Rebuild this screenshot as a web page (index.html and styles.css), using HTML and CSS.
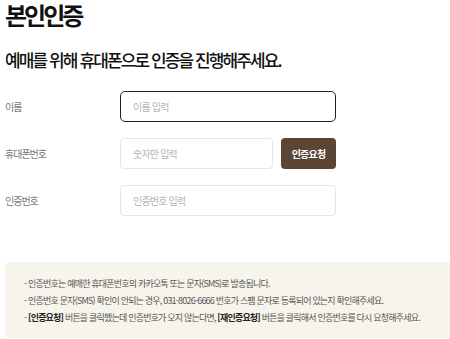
FILE: index.html
```html
<!DOCTYPE html>
<html lang="ko">

<head>
    <meta charset="UTF-8">
    <meta name="viewport" content="width=device-width, initial-scale=1.0">
    <title>본인인증</title>
    <link rel="stylesheet" href="styles.css">
</head>

<body>
    <div class="container">
        <h1 class="title">본인인증</h1>
        <h2 class="subtitle">예매를 위해 휴대폰으로 인증을 진행해주세요.</h2>

        <form class="auth-form">
            <div class="form-row">
                <label class="form-label" for="userName">이름</label>
                <input class="form-input focused" id="userName" type="text" placeholder="이름 입력">
            </div>
            <div class="form-row">
                <label class="form-label" for="userPhone">휴대폰번호</label>
                <input class="form-input short" id="userPhone" type="text" placeholder="숫자만 입력">
                <button class="request-btn" type="button">인증요청</button>
            </div>
            <div class="form-row">
                <label class="form-label" for="authCode">인증번호</label>
                <input class="form-input" id="authCode" type="text" placeholder="인증번호 입력">
            </div>
        </form>

        <div class="notice">
            <p>- 인증번호는 예매한 휴대폰번호의 카카오톡 또는 문자(SMS)로 발송됩니다.</p>
            <p>- 인증번호 문자(SMS) 확인이 안되는 경우, 031-8026-6666 번호가 스팸 문자로 등록되어 있는지 확인해주세요.</p>
            <p>- <strong>[인증요청]</strong> 버튼을 클릭했는데 인증번호가 오지 않는다면, <strong>[재인증요청]</strong> 버튼을 클릭해서 인증번호를 다시 요청해주세요.</p>
        </div>
    </div>
</body>
</html>
```

FILE: styles.css
```css
body {
    font-family: 'Noto Sans CJK KR', 'Noto Sans', sans-serif;
    background-color: #ffffff;
    color: #111111;
    margin: 0;
    padding: 0;
}

.container {
    padding: 0 0 0 5px;
}

.title {
    font-size: 24px;
    font-weight: 700;
    line-height: 30px;
    letter-spacing: -3px;
    margin: 0;
}

.subtitle {
    font-size: 17px;
    font-weight: 500;
    line-height: 24px;
    letter-spacing: -1.9px;
    margin: 18px 0 0;
}

.auth-form {
    margin-top: 19px;
    display: flex;
    flex-direction: column;
    gap: 16px;
}

.form-row {
    display: flex;
    align-items: center;
}

.form-label {
    width: 115px;
    font-size: 10px;
    color: #777777;
    letter-spacing: -1px;
}

.form-input {
    box-sizing: border-box;
    width: 216px;
    height: 31px;
    padding: 0 12px;
    border: 1px solid #e6e6e6;
    border-radius: 4px;
    font-family: inherit;
    font-size: 10px;
    letter-spacing: -0.8px;
    color: #333333;
    outline: none;
}

.form-input::placeholder {
    color: #b5b5b5;
}

.form-input.focused {
    border: 1.5px solid #222222;
    border-radius: 5px;
}

.form-input.short {
    width: 153px;
}

.request-btn {
    box-sizing: border-box;
    width: 55px;
    height: 31px;
    margin-left: 8px;
    border: none;
    border-radius: 4px;
    background-color: #5b4636;
    color: #ffffff;
    font-family: inherit;
    font-size: 10px;
    font-weight: 700;
    letter-spacing: -0.8px;
}

.notice {
    margin-top: 46px;
    box-sizing: border-box;
    height: 76px;
    padding: 13px 19px;
    background-color: #f7f4ec;
    border-radius: 5px 0 0 5px;
}

.notice p {
    margin: 0;
    font-size: 9px;
    line-height: 17px;
    letter-spacing: -0.8px;
    color: #555555;
    white-space: nowrap;
}

.notice strong {
    color: #222222;
}
```
